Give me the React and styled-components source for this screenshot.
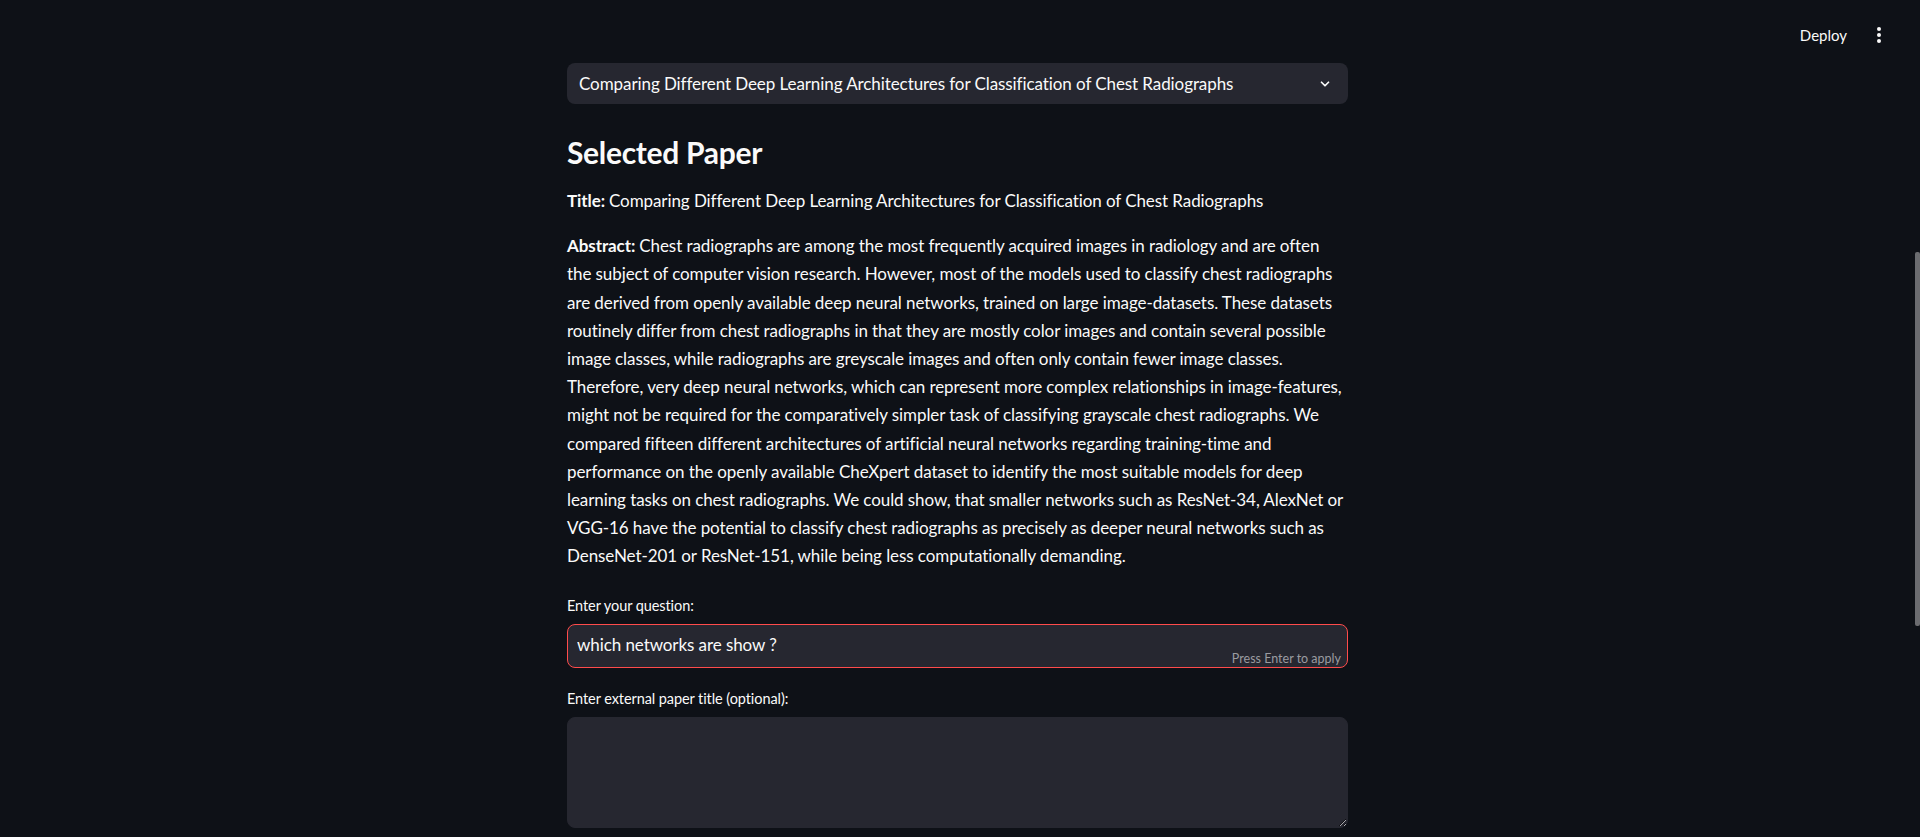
import React from "react";
import styled, { createGlobalStyle } from "styled-components";

const Global = createGlobalStyle`
  html, body { margin: 0; padding: 0; background: #0e1117; height: 100%; overflow: hidden; }
  body { font-family: Lato, "Noto Sans", sans-serif; color: #fafafa; color-scheme: dark; }
  * { box-sizing: border-box; }
`;

const Page = styled.div`
  position: relative;
  height: 837px;
  overflow: hidden;
  background: #0e1117;
  padding-right: 5px;
`;

const Header = styled.header`
  position: absolute;
  top: 0; left: 0; right: 0;
  height: 70px;
  display: flex;
  align-items: center;
  justify-content: flex-end;
  gap: 26px;
  padding-right: 35px;
  z-index: 2;
`;

const DeployButton = styled.button`
  background: transparent;
  border: none;
  color: #fafafa;
  font-family: Lato, "Noto Sans", sans-serif;
  font-size: 15px;
  padding: 0;
  cursor: pointer;
`;

const KebabButton = styled.button`
  background: transparent;
  border: none;
  padding: 0;
  width: 12px;
  height: 20px;
  display: flex;
  align-items: center;
  justify-content: center;
`;

const Scrollbar = styled.div`
  position: absolute;
  right: 0;
  top: 252px;
  width: 5px;
  height: 374px;
  background: #6b6c70;
  border-radius: 2px;
`;

const Main = styled.main`
  display: flex;
  justify-content: center;
  padding-top: 63px;
`;

const Column = styled.div`
  width: 781px;
  display: flex;
  flex-direction: column;
  letter-spacing: -0.08px;
`;

const Select = styled.div`
  height: 41px;
  background: #262730;
  border-radius: 8px;
  display: flex;
  align-items: center;
  justify-content: space-between;
  padding: 0 16px 0 12px;
  font-size: 17px;
  color: #fafafa;
`;

const Heading = styled.h2`
  margin: 30px 0 0;
  font-size: 30px;
  line-height: 36px;
  font-weight: 700;
  letter-spacing: -0.3px;
`;

const Para = styled.p`
  margin: ${(p) => p.$mt}px 0 0;
  padding-right: 3px;
  font-size: 17px;
  line-height: 28.2px;
  color: #fafafa;
`;

const Strong = styled.strong`
  font-weight: 700;
  margin-right: 4px;
`;

const Label = styled.label`
  display: block;
  margin-top: ${(p) => p.$mt}px;
  height: 22px;
  line-height: 22px;
  font-size: 14.5px;
  color: #fafafa;
  margin-bottom: 7px;
`;

const InputWrap = styled.div`
  position: relative;
  height: 44px;
  background: #262730;
  border: 1px solid #ff4b4b;
  border-radius: 8px;
  display: flex;
  align-items: center;
  padding: 0 0 3px 9px;
`;

const TextInput = styled.input`
  flex: 1;
  background: transparent;
  border: none;
  outline: none;
  color: #fafafa;
  font-family: Lato, "Noto Sans", sans-serif;
  font-size: 17px;
  letter-spacing: -0.08px;
  padding: 0;
`;

const Hint = styled.div`
  position: absolute;
  right: 6px;
  bottom: 1px;
  font-size: 12.5px;
  letter-spacing: 0;
  color: #9a9ba0;
`;

const TextArea = styled.textarea`
  display: block;
  width: 100%;
  height: 111px;
  background: #262730;
  border: 1px solid #262730;
  border-radius: 8px;
  color: #fafafa;
  font-family: Lato, "Noto Sans", sans-serif;
  font-size: 17px;
  padding: 10px;
  resize: vertical;
  outline: none;
`;

const Chevron = () => (
  <svg width="14" height="14" viewBox="0 0 24 24" fill="none" stroke="#fafafa" strokeWidth="3" strokeLinecap="round" strokeLinejoin="round">
    <path d="M6 9l6 6 6-6" />
  </svg>
);

const Kebab = () => (
  <svg width="6" height="18" viewBox="0 0 6 18">
    <circle cx="3" cy="3" r="2" fill="#fafafa" />
    <circle cx="3" cy="9" r="2" fill="#fafafa" />
    <circle cx="3" cy="15" r="2" fill="#fafafa" />
  </svg>
);

const TITLE = "Comparing Different Deep Learning Architectures for Classification of Chest Radiographs";
const ABSTRACT =
  "Chest radiographs are among the most frequently acquired images in radiology and are often the subject of computer vision research. However, most of the models used to classify chest radiographs are derived from openly available deep neural networks, trained on large image-datasets. These datasets routinely differ from chest radiographs in that they are mostly color images and contain several possible image classes, while radiographs are greyscale images and often only contain fewer image classes. Therefore, very deep neural networks, which can represent more complex relationships in image-features, might not be required for the comparatively simpler task of classifying grayscale chest radiographs. We compared fifteen different architectures of artificial neural networks regarding training-time and performance on the openly available CheXpert dataset to identify the most suitable models for deep learning tasks on chest radiographs. We could show, that smaller networks such as ResNet-34, AlexNet or VGG-16 have the potential to classify chest radiographs as precisely as deeper neural networks such as DenseNet-201 or ResNet-151, while being less computationally demanding.";

export default function App() {
  return (
    <>
      <Global />
      <Page>
        <Header>
          <DeployButton>Deploy</DeployButton>
          <KebabButton aria-label="menu"><Kebab /></KebabButton>
        </Header>
        <Main>
          <Column>
            <Select>
              <span>{TITLE}</span>
              <Chevron />
            </Select>
            <Heading>Selected Paper</Heading>
            <Para $mt={17}><Strong>Title:</Strong>{TITLE}</Para>
            <Para $mt={17}><Strong>Abstract:</Strong>{ABSTRACT}</Para>
            <Label $mt={24}>Enter your question:</Label>
            <InputWrap>
              <TextInput defaultValue="which networks are show ?" />
              <Hint>Press Enter to apply</Hint>
            </InputWrap>
            <Label $mt={20}>Enter external paper title (optional):</Label>
            <TextArea />
          </Column>
        </Main>
        <Scrollbar />
      </Page>
    </>
  );
}
